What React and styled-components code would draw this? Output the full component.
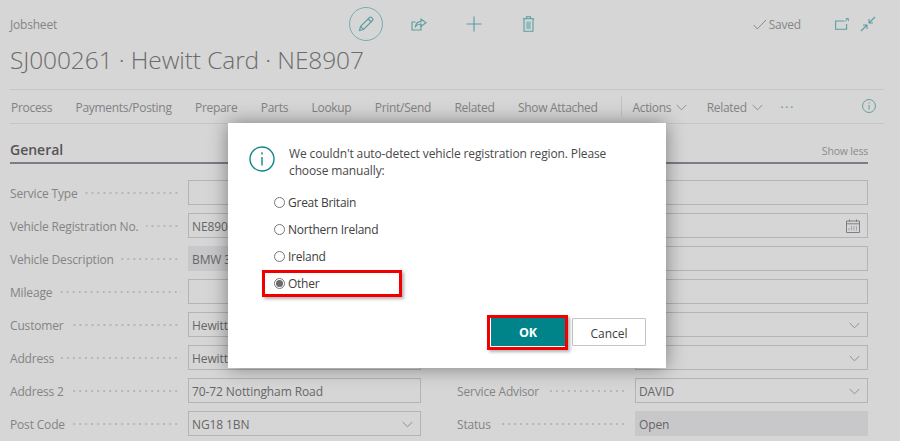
import React from 'react';
import styled, { createGlobalStyle } from 'styled-components';

const Global = createGlobalStyle`
  html, body { margin: 0; padding: 0; background: #d6d6d6; }
  body { width: 900px; height: 441px; overflow: hidden; font-family: "Open Sans", "Liberation Sans", sans-serif; }
  *, *::before, *::after { box-sizing: border-box; }
`;

const Page = styled.div`
  position: relative;
  width: 900px;
  height: 441px;
  overflow: hidden;
  background: #d6d6d6;
  color: #7e7e7e;
  font-size: 12px;
`;

const Header = styled.header`
  display: flex;
  align-items: center;
  height: 48px;
  padding: 0 22px 0 10px;
`;

const Caption = styled.div`
  width: 339px;
  font-size: 12px;
  letter-spacing: -0.2px;
  color: #858585;
`;

const EditCircle = styled.div`
  display: flex;
  align-items: center;
  justify-content: center;
  width: 34px;
  height: 34px;
  border: 1px solid #77adad;
  border-radius: 50%;
`;

const ActionSlot = styled.div`
  display: flex;
  align-items: center;
  justify-content: center;
  width: 20px;
  height: 20px;
  margin-left: ${p => p.$gap}px;
`;

const Saved = styled.div`
  display: flex;
  align-items: center;
  margin-left: auto;
  gap: 2px;
  font-size: 12px;
  letter-spacing: -0.2px;
  color: #868686;
`;

const Title = styled.h1`
  margin: 0;
  padding: 0 0 0 10px;
  height: 41px;
  font-size: 24.5px;
  line-height: 23px;
  letter-spacing: -0.1px;
  font-weight: 300;
  color: #6b6b6b;
`;

const CommandBar = styled.nav`
  display: flex;
  align-items: center;
  gap: 23.4px;
  height: 35px;
  margin: 0 16px 0 10px;
  padding: 1px 0 0 1px;
  border-top: 1px solid #c6c6c6;
  border-bottom: 1px solid #c6c6c6;
  font-size: 12px;
  letter-spacing: -0.3px;
  color: #828282;
`;

const Divider = styled.span`
  width: 1px;
  height: 20px;
  margin: -2px -13px 0 0;
  background: #c0c0c0;
`;

const MenuItem = styled.span`
  display: flex;
  align-items: center;
  gap: 5px;
  margin-left: ${p => (p.$tight ? -4 : 0)}px;
`;

const Dots = styled.span`
  margin-left: -6px;
  color: #5f9c9c;
  font-size: 13px;
  letter-spacing: 1.5px;
  line-height: 8px;
  padding-bottom: 9px;
`;

const InfoSlot = styled.span`
  display: flex;
  margin: -2px 8px 0 auto;
`;

const Section = styled.section`
  padding: 15px 32px 0 10px;
`;

const SectionHead = styled.div`
  display: flex;
  align-items: center;
  justify-content: space-between;
  height: 25px;
  padding-bottom: 2px;
  border-bottom: 2px solid #797d84;
`;

const SectionTitle = styled.h2`
  margin: 0;
  font-size: 14px;
  font-weight: 600;
  color: #555;
`;

const ShowLess = styled.span`
  margin-top: 2px;
  font-size: 10.5px;
  letter-spacing: -0.2px;
  color: #8b8b8b;
`;

const FormGrid = styled.div`
  display: grid;
  grid-template-columns: 411px 411px;
  column-gap: 36px;
  grid-auto-rows: 33px;
  padding-top: 16px;
`;

const Row = styled.div`
  display: flex;
  align-items: flex-start;
`;

const Label = styled.span`
  display: flex;
  align-items: center;
  gap: 7px;
  width: 178px;
  height: 25px;
  padding: 1px 7px 0 0;
  font-size: 12px;
  letter-spacing: -0.17px;
  color: #848484;
  white-space: nowrap;
`;

const Leader = styled.span`
  flex: 1;
  height: 2px;
  background-image: radial-gradient(circle at 1px 1px, #b6b6b6 0.8px, transparent 1px);
  background-size: 6px 2px;
  background-position: right;
`;

const Field = styled.div`
  display: flex;
  align-items: center;
  justify-content: space-between;
  width: 233px;
  height: 25px;
  padding: 1px 7px 0 3px;
  font-size: 12px;
  letter-spacing: -0.1px;
  color: #666;
  border: 1px solid ${p => (p.$readOnly ? '#c8c8ca' : '#b4b4b6')};
  background: ${p => (p.$readOnly ? '#c8c8ca' : 'transparent')};
`;

const Dialog = styled.div`
  position: absolute;
  top: 123px;
  left: 228px;
  width: 438px;
  height: 245px;
  padding: 22px 20px 21px 21px;
  background: #fff;
  box-shadow: 0 0 18px rgba(0, 0, 0, 0.42);
  color: #444;
  font-size: 12px;
`;

const Message = styled.div`
  display: flex;
  gap: 14px;
  line-height: 17px;
`;

const MessageIcon = styled.span`
  flex: none;
  width: 26px;
  padding-top: 1px;
`;

const MessageText = styled.p`
  margin: 0;
  width: 340px;
  letter-spacing: -0.12px;
  color: #484848;
`;

const Options = styled.div`
  display: flex;
  flex-direction: column;
  margin: 10px 0 0 25px;
`;

const Option = styled.label`
  position: relative;
  display: flex;
  align-items: center;
  gap: 3px;
  height: 27px;
  color: #404040;
  font-size: 12px;
  letter-spacing: -0.25px;
  &::after {
    content: ${p => (p.$highlight ? '""' : 'none')};
    position: absolute;
    top: 0;
    left: -12px;
    width: 140px;
    height: 27px;
    border: 3px solid #f20000;
    box-shadow: 2px 2px 3px rgba(0, 0, 0, 0.3);
  }
`;

const Radio = styled.span`
  display: flex;
  align-items: center;
  justify-content: center;
  width: 11px;
  height: 11px;
  border: 1px solid #777;
  border-radius: 50%;
  &::before {
    content: ${p => (p.$checked ? '""' : 'none')};
    width: 7px;
    height: 7px;
    border-radius: 50%;
    background: #6a6a6a;
  }
`;

const Footer = styled.div`
  display: flex;
  justify-content: flex-end;
  gap: 7px;
  margin-top: 21px;
`;

const OkWrap = styled.div`
  position: relative;
  &::after {
    content: "";
    position: absolute;
    inset: -3px -3px -4px -4px;
    border: 3px solid #f20000;
    box-shadow: 2px 2px 3px rgba(0, 0, 0, 0.3);
    pointer-events: none;
  }
`;

const OkButton = styled.button`
  display: block;
  width: 74px;
  height: 28px;
  border: 0;
  padding: 1px 0 0;
  background: #008489;
  color: #fff;
  font: 700 12.5px "Open Sans", sans-serif;
`;

const CancelButton = styled.button`
  width: 74px;
  height: 28px;
  padding: 2px 0 0;
  border: 1px solid #c4c4c4;
  border-radius: 1px;
  background: #fff;
  color: #3c3c3c;
  font: 500 12px "Open Sans", sans-serif;
`;

const Teal = '#5a9e9f';

const Pencil = () => (
  <svg width="16" height="16" viewBox="0 0 16 16" fill="none" stroke={Teal} strokeWidth="1.1">
    <path d="M1.5 14.5l1-4L11.5 1.5a1.6 1.6 0 0 1 2.2 0l.8.8a1.6 1.6 0 0 1 0 2.2L5.5 13.5z" />
    <path d="M2.6 10.4l3 3M10.2 3l3 3" />
  </svg>
);
const Share = () => (
  <svg width="16" height="15" viewBox="0 0 16 15" fill="none" stroke={Teal} strokeWidth="1.1">
    <path d="M10 7.5v5.5H1V5h3.5" />
    <path d="M4.5 9.5C5 6 7.5 4.6 10 4.6V2l5 3.7L10 9.4V7C8 7 6 7.6 4.5 9.5z" />
  </svg>
);
const Plus = () => (
  <svg width="16" height="16" viewBox="0 0 16 16" stroke={Teal} strokeWidth="1.1">
    <path d="M8 .5v15M.5 8h15" />
  </svg>
);
const Trash = () => (
  <svg width="13" height="16" viewBox="0 0 13 16" fill="none" stroke={Teal} strokeWidth="1.1">
    <path d="M.8 2.8h11.4M4.5 2.6V.8h4v1.8M2 2.8v12.4h9V2.8" />
    <path d="M4.2 5.5h4.6v7.5H4.2z" fill="#8dbcbc" stroke="none" />
  </svg>
);
const Check = () => (
  <svg width="14" height="11" viewBox="0 0 14 11" fill="none" stroke="#8a8a8a" strokeWidth="1">
    <path d="M.8 6l3.4 4L13.2.8" />
  </svg>
);
const OpenNew = () => (
  <svg width="14" height="12" viewBox="0 0 14 12" fill="none" stroke={Teal} strokeWidth="1.1">
    <path d="M9 3H.6v8.2h11V6" />
    <path d="M9.5 3.5L13 .7M10.7.6h2.7v2.6" strokeWidth="0.9" />
  </svg>
);
const Collapse = () => (
  <svg width="16" height="16" viewBox="0 0 16 16" fill="none" stroke={Teal} strokeWidth="1.1">
    <path d="M9 7l6-6M9 3v4h4M7 9l-6 6M3 9h4v4" />
  </svg>
);
const Chevron = ({ color = '#8f8f8f', w = 11 }) => (
  <svg width={w} height="7" viewBox="0 0 11 7" fill="none" stroke={color} strokeWidth="1">
    <path d="M.7 1l4.8 4.8L10.3 1" />
  </svg>
);
const Info = ({ size, color, sw }) => (
  <svg width={size} height={size} viewBox="0 0 26 26" fill="none" stroke={color} strokeWidth={sw}>
    <circle cx="13" cy="13" r="12" />
    <path d="M13 11v8.5M13 6.3v2.2" />
  </svg>
);
const Calendar = () => (
  <svg width="14" height="14" viewBox="0 0 14 14" fill="none" stroke="#7c7f84" strokeWidth="1">
    <path d="M.5 2h13v11.5H.5zM.5 4.8h13M3.5.5v2.5M10.5.5v2.5" />
    <path d="M3 11.5V9M5.5 11.5V7M8 11.5V7M10.5 11.5V7" strokeWidth="0.8" opacity="0.7" />
  </svg>
);

const menu = ['Process', 'Payments/Posting', 'Prepare', 'Parts', 'Lookup', 'Print/Send', 'Related', 'Show Attached'];

const rows = [
  [{ label: 'Service Type' }, { label: '' }],
  [{ label: 'Vehicle Registration No.', value: 'NE8907' }, { label: '', icon: 'calendar' }],
  [{ label: 'Vehicle Description', value: 'BMW 3', readOnly: true }, { label: '' }],
  [{ label: 'Mileage' }, { label: '' }],
  [{ label: 'Customer', value: 'Hewitt Card' }, { label: '', icon: 'chevron' }],
  [{ label: 'Address', value: 'Hewitt Card' }, { label: '', icon: 'chevron' }],
  [{ label: 'Address 2', value: '70-72 Nottingham Road' }, { label: 'Service Advisor', value: 'DAVID', icon: 'chevron' }],
  [{ label: 'Post Code', value: 'NG18 1BN', icon: 'chevron' }, { label: 'Status', value: 'Open', readOnly: true }],
];

const FormField = ({ label, value, icon, readOnly }) => (
  <Row>
    <Label>
      {label}
      <Leader />
    </Label>
    <Field $readOnly={readOnly}>
      <span>{value}</span>
      {icon === 'chevron' && <Chevron />}
      {icon === 'calendar' && <Calendar />}
    </Field>
  </Row>
);

export default function App() {
  return (
    <Page>
      <Global />
      <Header>
        <Caption>Jobsheet</Caption>
        <EditCircle><Pencil /></EditCircle>
        <ActionSlot $gap={26}><Share /></ActionSlot>
        <ActionSlot $gap={35}><Plus /></ActionSlot>
        <ActionSlot $gap={34}><Trash /></ActionSlot>
        <Saved><Check />Saved</Saved>
        <ActionSlot $gap={31}><OpenNew /></ActionSlot>
        <ActionSlot $gap={6}><Collapse /></ActionSlot>
      </Header>
      <Title>SJ000261 · Hewitt Card · NE8907</Title>
      <CommandBar>
        {menu.map(m => <MenuItem key={m}>{m}</MenuItem>)}
        <Divider />
        <MenuItem>Actions <Chevron /></MenuItem>
        <MenuItem $tight>Related <Chevron /></MenuItem>
        <Dots>...</Dots>
        <InfoSlot><Info size={14} color={Teal} sw={1.8} /></InfoSlot>
      </CommandBar>
      <Section>
        <SectionHead>
          <SectionTitle>General</SectionTitle>
          <ShowLess>Show less</ShowLess>
        </SectionHead>
        <FormGrid>
          {rows.flat().map((f, i) => <FormField key={i} {...f} />)}
        </FormGrid>
      </Section>
      <Dialog>
        <Message>
          <MessageIcon><Info size={26} color="#13858a" sw={1.4} /></MessageIcon>
          <MessageText>We couldn't auto-detect vehicle registration region. Please choose manually:</MessageText>
        </Message>
        <Options>
          <Option><Radio />Great Britain</Option>
          <Option><Radio />Northern Ireland</Option>
          <Option><Radio />Ireland</Option>
          <Option $highlight><Radio $checked />Other</Option>
        </Options>
        <Footer>
          <OkWrap><OkButton>OK</OkButton></OkWrap>
          <CancelButton>Cancel</CancelButton>
        </Footer>
      </Dialog>
    </Page>
  );
}
